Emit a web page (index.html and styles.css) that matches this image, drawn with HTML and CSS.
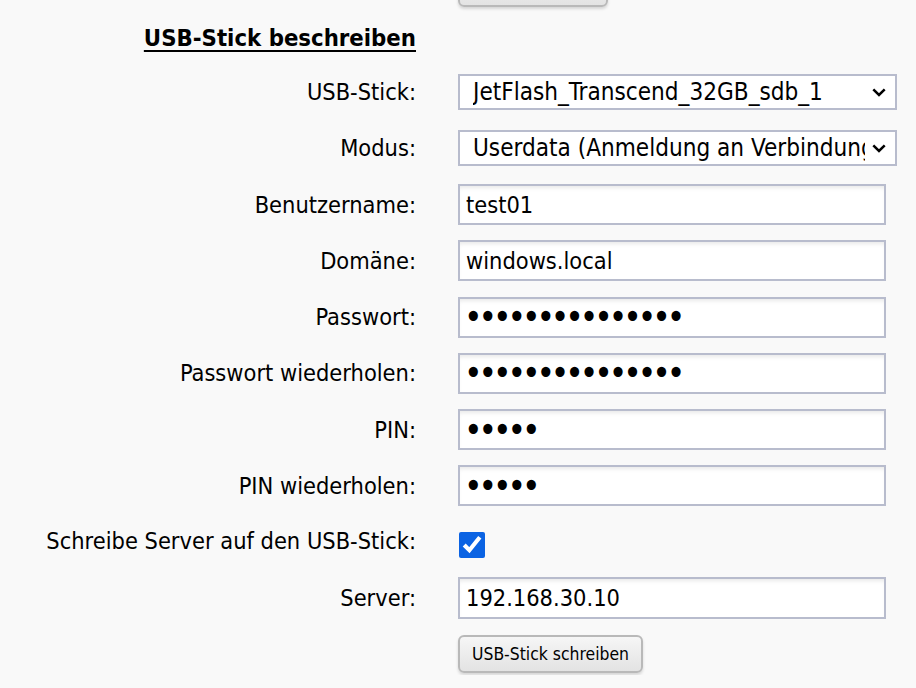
FILE: index.html
```html
<!DOCTYPE html>
<html lang="de">
<head>
<meta charset="utf-8">
<title>USB-Stick beschreiben</title>
<link rel="stylesheet" href="styles.css">
</head>
<body>
<div class="page">
  <div class="top-actions">
    <button type="button" class="btn btn-top" aria-label="Aktualisieren"></button>
  </div>

  <h2 class="section-title"><span>USB-Stick beschreiben</span></h2>

  <form class="form-grid">
    <label class="lbl" for="stick">USB-Stick:</label>
    <div class="cell">
      <div class="select-wrap">
        <select id="stick" class="ctl-select">
          <option>JetFlash_Transcend_32GB_sdb_1</option>
        </select>
        <svg class="chev" width="14" height="9" viewBox="0 0 14 9"><path d="M1.3 1.3 L7 7 L12.7 1.3" fill="none" stroke="#000" stroke-width="2.5"/></svg>
      </div>
    </div>

    <label class="lbl" for="modus">Modus:</label>
    <div class="cell">
      <div class="select-wrap">
        <select id="modus" class="ctl-select">
          <option>Userdata (Anmeldung an Verbindungsserver)</option>
        </select>
        <svg class="chev" width="14" height="9" viewBox="0 0 14 9"><path d="M1.3 1.3 L7 7 L12.7 1.3" fill="none" stroke="#000" stroke-width="2.5"/></svg>
      </div>
    </div>

    <label class="lbl" for="user">Benutzername:</label>
    <div class="cell"><input id="user" class="ctl-input" type="text" value="test01"></div>

    <label class="lbl" for="domain">Domäne:</label>
    <div class="cell"><input id="domain" class="ctl-input" type="text" value="windows.local"></div>

    <label class="lbl" for="pw">Passwort:</label>
    <div class="cell"><input id="pw" class="ctl-input pw" type="password" value="geheimgeheim123"></div>

    <label class="lbl" for="pw2">Passwort wiederholen:</label>
    <div class="cell"><input id="pw2" class="ctl-input pw" type="password" value="geheimgeheim123"></div>

    <label class="lbl" for="pin">PIN:</label>
    <div class="cell"><input id="pin" class="ctl-input pw" type="password" value="12345"></div>

    <label class="lbl" for="pin2">PIN wiederholen:</label>
    <div class="cell"><input id="pin2" class="ctl-input pw" type="password" value="12345"></div>

    <label class="lbl lbl-check" for="srvchk">Schreibe Server auf den USB-Stick:</label>
    <div class="cell cell-check"><input id="srvchk" class="ctl-check" type="checkbox" checked></div>

    <label class="lbl" for="server">Server:</label>
    <div class="cell"><input id="server" class="ctl-input ctl-server" type="text" value="192.168.30.10"></div>

    <div class="lbl"></div>
    <div class="cell"><button type="button" class="btn btn-write">USB-Stick schreiben</button></div>
  </form>
</div>
</body>
</html>
```
FILE: styles.css
```css
html, body {
  margin: 0;
  padding: 0;
  background: #f9f9f9;
}
body {
  font-family: "DejaVu Sans Condensed", "DejaVu Sans", sans-serif;
  font-size: 23.4px;
  color: #000;
  overflow: hidden;
}
.page {
  width: 916px;
}
.top-actions {
  margin-top: -31px;
  padding-left: 458px;
  height: 38px;
}
.btn {
  font-family: "DejaVu Sans Condensed", "DejaVu Sans", sans-serif;
  font-size: 17.4px;
  color: #000;
  background: linear-gradient(#f6f6f6, #e3e3e3);
  border: 2px solid #b9b9b9;
  border-radius: 6px;
  box-shadow: 0 2px 3px rgba(0, 0, 0, 0.14);
  padding: 0 12px;
  margin: 0;
  box-sizing: border-box;
}
.btn-top {
  width: 150px;
  height: 38px;
}
.section-title {
  margin: 15.5px 0 0 0;
  width: 416px;
  text-align: right;
  font-size: 23.7px;
  font-weight: bold;
  line-height: 30px;
}
.section-title span {
  text-decoration: underline;
  text-decoration-thickness: 2px;
  text-underline-offset: 4px;
}
.form-grid {
  margin: 19.1px 0 0 0;
  display: grid;
  grid-template-columns: 416px 439px;
  column-gap: 42px;
  row-gap: 15.25px;
  align-items: center;
}
.lbl {
  text-align: right;
  white-space: nowrap;
  line-height: 28px;
}
.cell {
  height: 41px;
  display: flex;
  align-items: center;
}
.select-wrap {
  position: relative;
  width: 439px;
  height: 36px;
}
.ctl-select {
  appearance: none;
  -webkit-appearance: none;
  width: 100%;
  height: 36px;
  box-sizing: border-box;
  border: 2px solid #b8bccd;
  border-radius: 0;
  background: #fff;
  font-family: inherit;
  font-size: 24.1px;
  color: #000;
  padding: 0 30px 0 13px;
  margin: 0;
}
.chev {
  position: absolute;
  right: 11px;
  top: 14px;
  pointer-events: none;
}
.ctl-input {
  width: 428px;
  height: 41px;
  box-sizing: border-box;
  border: 2px solid #b8bccd;
  border-radius: 0;
  background: #fff;
  box-shadow: inset 0 4px 4px -2px rgba(0, 0, 0, 0.09);
  font-family: inherit;
  font-size: 23.4px;
  color: #000;
  padding: 0 6px;
  margin: 0;
  outline: none;
}
.ctl-server {
  height: 42px;
}
.pw {
  font-size: 35px;
  letter-spacing: -4.1px;
  padding-left: 4px;
}
.cell-check {
  align-items: flex-start;
}
.ctl-check {
  width: 26px;
  height: 26px;
  margin: 10.5px 0 0 1px;
  accent-color: #0b63e3;
}
.lbl-check {
  align-self: start;
  margin-top: 5px;
}
.btn-write {
  width: 185px;
  height: 38px;
  padding: 0;
  position: relative;
  top: -1px;
}
```
